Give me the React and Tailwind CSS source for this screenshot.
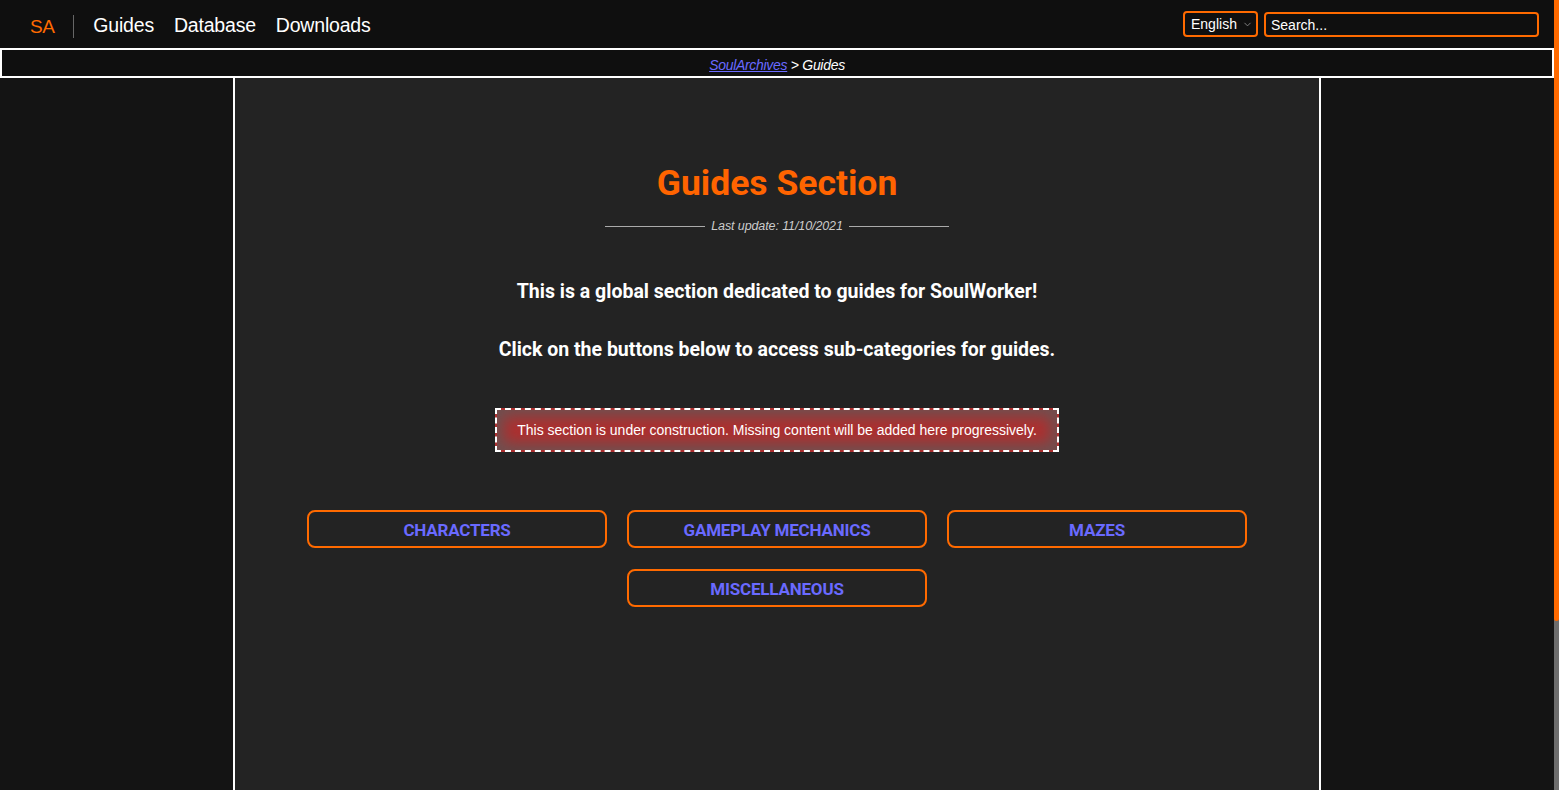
import { ChevronDown } from "lucide-react";

const NAV = ["Guides", "Database", "Downloads"];
const CATEGORIES = ["CHARACTERS", "GAMEPLAY MECHANICS", "MAZES", "MISCELLANEOUS"];

function Header() {
  return (
    <header className="h-12 bg-[#0f0f0f] flex items-center justify-between pl-[30px] pr-[15px] font-['Liberation_Sans',sans-serif]">
      <div className="flex items-center pt-[4px]">
        <span className="text-[19px] text-[#ff6a00] leading-none tracking-[-0.5px]">SA</span>
        <span className="mx-[19px] w-px h-[23px] bg-[#666]" />
        <nav className="flex items-center gap-[20px]">
          {NAV.map((item) => (
            <a key={item} className="text-[19.5px] text-white leading-none tracking-[-0.2px]">
              {item}
            </a>
          ))}
        </nav>
      </div>
      <div className="flex items-center gap-[6px]">
        <div className="relative w-[75px] h-[26px] border-2 border-[#ff6a00] rounded-[4px] flex items-center pl-[6px] text-[14px] text-white">
          English
          <ChevronDown className="absolute right-[3px] top-[6px] w-[11px] h-[11px] text-[#888]" strokeWidth={2} />
        </div>
        <input
          placeholder="Search..."
          className="w-[275px] h-[25px] mt-[1px] border-2 border-[#ff6a00] rounded-[4px] bg-[#0f0f0f] px-[5px] text-[14px] text-white placeholder:text-white outline-none"
        />
      </div>
    </header>
  );
}

function Breadcrumb() {
  return (
    <div className="h-[30px] border-2 border-white bg-[#0f0f0f] flex items-center justify-center pt-[4px] text-[14px] italic font-['Liberation_Sans',sans-serif] tracking-[-0.3px]">
      <a className="text-[#6a6aff] underline">SoulArchives</a>
      <span className="text-white">&nbsp;&gt; Guides</span>
    </div>
  );
}

export default function App() {
  return (
    <div className="flex h-[790px] overflow-hidden bg-[#141414]">
      <div className="flex-1 min-w-0 flex flex-col">
        <Header />
        <Breadcrumb />
        <div className="flex-1 flex justify-center">
          <main className="w-[1088px] border-x-2 border-white bg-[#232323] flex flex-col items-center text-center font-['Roboto',sans-serif]">
            <h1 className="mt-[85px] text-[35.5px] leading-[40px] font-bold text-[#ff6400]">
              Guides Section
            </h1>
            <div className="mt-[15px] flex items-center gap-[6px] h-4">
              <span className="w-[100px] h-px bg-[#aaa]" />
              <span className="text-[12.5px] italic text-[#ccc] font-['Liberation_Sans',sans-serif] tracking-[-0.1px]">
                Last update: 11/10/2021
              </span>
              <span className="w-[100px] h-px bg-[#aaa]" />
            </div>
            <p className="mt-[46px] text-[19.5px] leading-6 font-bold text-white">
              This is a global section dedicated to guides for SoulWorker!
            </p>
            <p className="mt-[34px] text-[19.5px] leading-6 font-bold text-white">
              Click on the buttons below to access sub-categories for guides.
            </p>
            <div className="mt-[46px] w-[564px] h-[44px] border-2 border-dashed border-white bg-[#ad2f2f] shadow-[inset_0_0_14px_7px_#704f4f] flex items-center justify-center text-[14px] text-white font-['Liberation_Sans',sans-serif]">
              This section is under construction. Missing content will be added here progressively.
            </div>
            <div className="mt-[58px] w-[940px] flex flex-wrap justify-center gap-x-5 gap-y-[21px]">
              {CATEGORIES.map((c) => (
                <a
                  key={c}
                  className="w-[300px] h-[38px] border-2 border-[#ff6a00] rounded-[8px] flex items-center justify-center pt-[3px] text-[17px] font-bold text-[#6a6aff] tracking-[-0.2px]"
                >
                  {c}
                </a>
              ))}
            </div>
          </main>
        </div>
      </div>
      <div className="w-[5px] bg-[#6e6e6e] flex flex-col">
        <div className="h-[621px] bg-[#ff6a00] rounded-b-[3px]" />
      </div>
    </div>
  );
}
